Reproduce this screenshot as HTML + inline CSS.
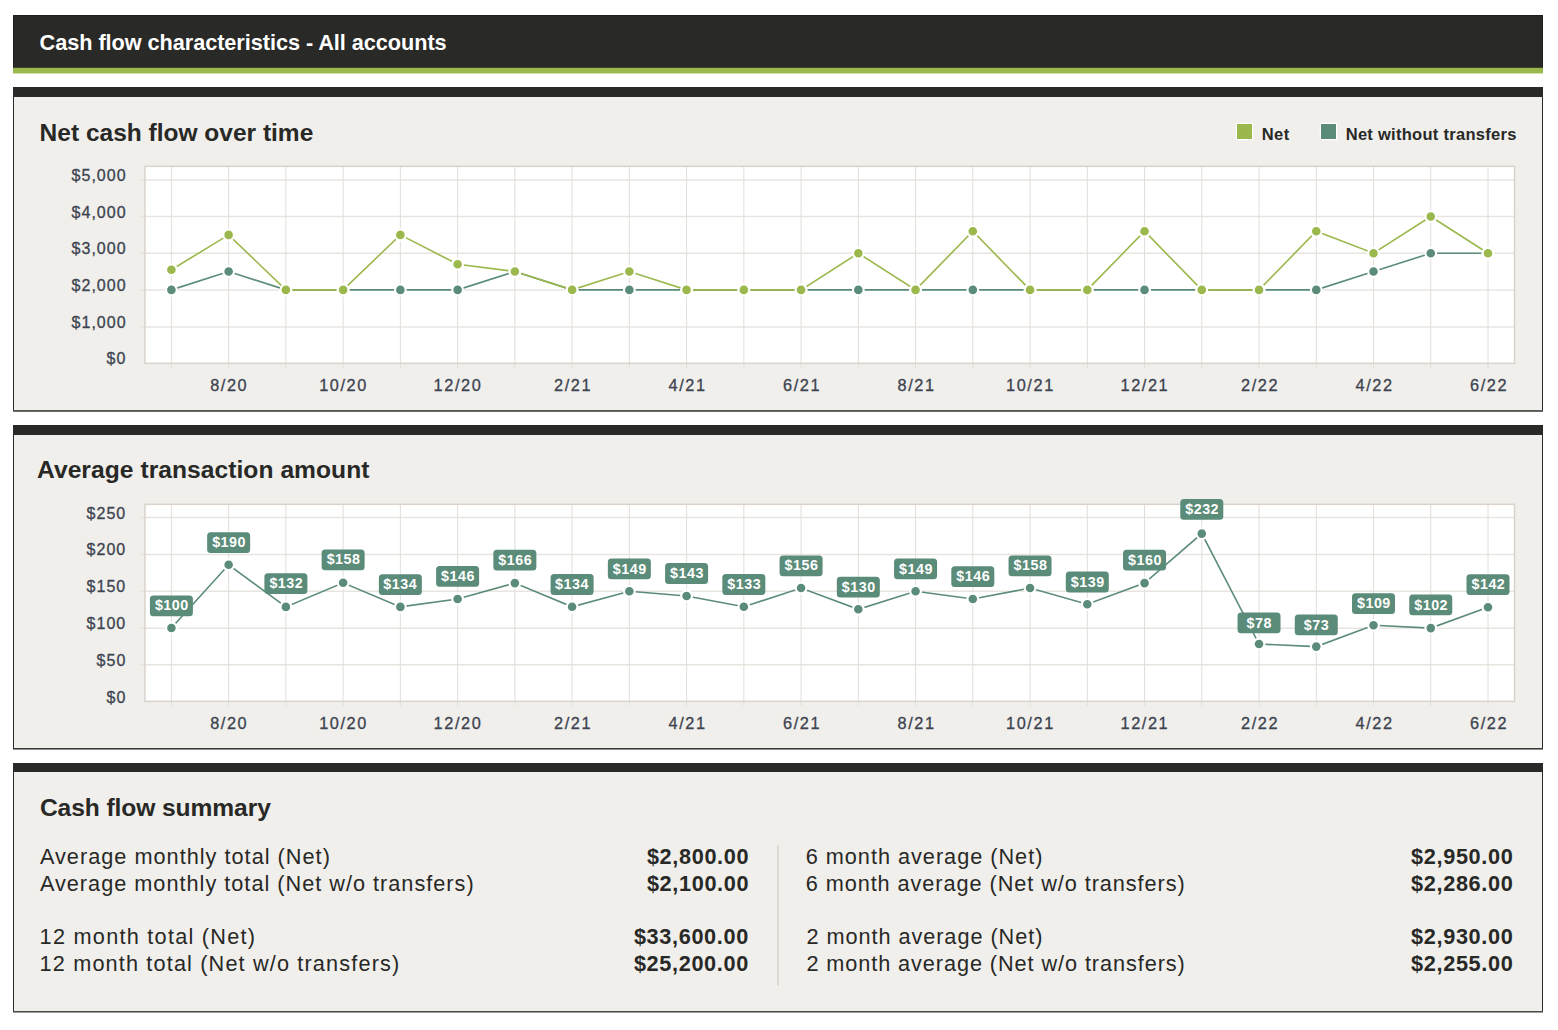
<!DOCTYPE html>
<html><head><meta charset="utf-8"><style>
html,body{margin:0;padding:0;background:#fff;}
body{width:1558px;height:1030px;position:relative;overflow:hidden;font-family:"Liberation Sans",sans-serif;color:#282826;}
.abs{position:absolute;}
.hdr{left:13px;top:15px;width:1530px;height:52.8px;background:#292927;box-shadow:inset 0 0 0 1px #1e1e1d;}
.grn{left:13px;top:67px;width:1530px;height:7px;background:linear-gradient(to bottom, rgba(155,184,76,0.25) 0px, rgba(155,184,76,0.25) 1px, #9bb84c 1px, #9bb84c 6px, rgba(155,184,76,0.45) 6px, rgba(155,184,76,0.45) 7px);}
.panel{left:13px;width:1528px;background:#f0efeb;border-left:1px solid #2a2a28;border-right:1px solid #2a2a28;border-top:10px solid #292927;}
.bl{position:absolute;left:13px;width:1530px;}
.t{position:absolute;white-space:nowrap;line-height:1;font-family:"Liberation Sans",sans-serif;}
svg{position:absolute;left:0;top:0;}
</style></head><body>
<div class="abs hdr"></div>
<div class="abs grn"></div>
<div class="abs panel" style="top:87px;height:313px;"></div>
<div class="bl" style="top:410px;height:1px;background:#565654"></div>
<div class="bl" style="top:411px;height:1px;background:#6a6a68"></div>
<div class="abs panel" style="top:425px;height:313px;"></div>
<div class="bl" style="top:748px;height:1px;background:#3a3a38"></div>
<div class="bl" style="top:749px;height:1px;background:#8e8e8c"></div>
<div class="abs panel" style="top:763px;border-top-width:9px;height:239px;"></div>
<div class="bl" style="top:1011px;height:1px;background:#4a4a48"></div>
<div class="bl" style="top:1012px;height:1px;background:#9c9c9a"></div>
<div class="abs" style="left:1237px;top:124px;width:15px;height:15px;background:#9bb84c;box-shadow:0 0 0 1.2px #fff;"></div>
<div class="abs" style="left:1321px;top:124px;width:15px;height:15px;background:#5b8c79;box-shadow:0 0 0 1.2px #fff;"></div>
<svg width="1558" height="1030" viewBox="0 0 1558 1030">
<rect x="145" y="166.30" width="1369.5" height="197.00" fill="#fff"/>
<line x1="140" y1="180.00" x2="1514.5" y2="180.00" stroke="#e8e5e0" stroke-width="1.5"/>
<line x1="140" y1="216.60" x2="1514.5" y2="216.60" stroke="#e8e5e0" stroke-width="1.5"/>
<line x1="140" y1="253.30" x2="1514.5" y2="253.30" stroke="#e8e5e0" stroke-width="1.5"/>
<line x1="140" y1="290.00" x2="1514.5" y2="290.00" stroke="#e8e5e0" stroke-width="1.5"/>
<line x1="140" y1="326.90" x2="1514.5" y2="326.90" stroke="#e8e5e0" stroke-width="1.5"/>
<line x1="171.40" y1="166.30" x2="171.40" y2="367.80" stroke="#e2ded9" stroke-width="1"/>
<line x1="228.64" y1="166.30" x2="228.64" y2="367.80" stroke="#e2ded9" stroke-width="1"/>
<line x1="285.89" y1="166.30" x2="285.89" y2="367.80" stroke="#e2ded9" stroke-width="1"/>
<line x1="343.13" y1="166.30" x2="343.13" y2="367.80" stroke="#e2ded9" stroke-width="1"/>
<line x1="400.37" y1="166.30" x2="400.37" y2="367.80" stroke="#e2ded9" stroke-width="1"/>
<line x1="457.62" y1="166.30" x2="457.62" y2="367.80" stroke="#e2ded9" stroke-width="1"/>
<line x1="514.86" y1="166.30" x2="514.86" y2="367.80" stroke="#e2ded9" stroke-width="1"/>
<line x1="572.10" y1="166.30" x2="572.10" y2="367.80" stroke="#e2ded9" stroke-width="1"/>
<line x1="629.35" y1="166.30" x2="629.35" y2="367.80" stroke="#e2ded9" stroke-width="1"/>
<line x1="686.59" y1="166.30" x2="686.59" y2="367.80" stroke="#e2ded9" stroke-width="1"/>
<line x1="743.83" y1="166.30" x2="743.83" y2="367.80" stroke="#e2ded9" stroke-width="1"/>
<line x1="801.08" y1="166.30" x2="801.08" y2="367.80" stroke="#e2ded9" stroke-width="1"/>
<line x1="858.32" y1="166.30" x2="858.32" y2="367.80" stroke="#e2ded9" stroke-width="1"/>
<line x1="915.57" y1="166.30" x2="915.57" y2="367.80" stroke="#e2ded9" stroke-width="1"/>
<line x1="972.81" y1="166.30" x2="972.81" y2="367.80" stroke="#e2ded9" stroke-width="1"/>
<line x1="1030.05" y1="166.30" x2="1030.05" y2="367.80" stroke="#e2ded9" stroke-width="1"/>
<line x1="1087.30" y1="166.30" x2="1087.30" y2="367.80" stroke="#e2ded9" stroke-width="1"/>
<line x1="1144.54" y1="166.30" x2="1144.54" y2="367.80" stroke="#e2ded9" stroke-width="1"/>
<line x1="1201.78" y1="166.30" x2="1201.78" y2="367.80" stroke="#e2ded9" stroke-width="1"/>
<line x1="1259.03" y1="166.30" x2="1259.03" y2="367.80" stroke="#e2ded9" stroke-width="1"/>
<line x1="1316.27" y1="166.30" x2="1316.27" y2="367.80" stroke="#e2ded9" stroke-width="1"/>
<line x1="1373.51" y1="166.30" x2="1373.51" y2="367.80" stroke="#e2ded9" stroke-width="1"/>
<line x1="1430.76" y1="166.30" x2="1430.76" y2="367.80" stroke="#e2ded9" stroke-width="1"/>
<line x1="1488.00" y1="166.30" x2="1488.00" y2="367.80" stroke="#e2ded9" stroke-width="1"/>
<rect x="144.95" y="166.35" width="1369.6" height="197.00" fill="none" stroke="#d9d3cb" stroke-width="1.5"/>
<polyline points="171.40,289.88 228.64,271.55 285.89,289.88 343.13,289.88 400.37,289.88 457.62,289.88 514.86,271.55 572.10,289.88 629.35,289.88 686.59,289.88 743.83,289.88 801.08,289.88 858.32,289.88 915.57,289.88 972.81,289.88 1030.05,289.88 1087.30,289.88 1144.54,289.88 1201.78,289.88 1259.03,289.88 1316.27,289.88 1373.51,271.55 1430.76,253.22 1488.00,253.22" fill="none" stroke="#5b8c79" stroke-width="1.6"/>
<polyline points="171.40,269.72 228.64,234.89 285.89,289.88 343.13,289.88 400.37,234.89 457.62,264.22 514.86,271.55 572.10,289.88 629.35,271.55 686.59,289.88 743.83,289.88 801.08,289.88 858.32,253.22 915.57,289.88 972.81,231.22 1030.05,289.88 1087.30,289.88 1144.54,231.22 1201.78,289.88 1259.03,289.88 1316.27,231.22 1373.51,253.22 1430.76,216.56 1488.00,253.22" fill="none" stroke="#9bb84c" stroke-width="1.6"/>
<circle cx="171.40" cy="289.88" r="5.35" fill="#5b8c79" stroke="#fff" stroke-width="2.1"/>
<circle cx="228.64" cy="271.55" r="5.35" fill="#5b8c79" stroke="#fff" stroke-width="2.1"/>
<circle cx="285.89" cy="289.88" r="5.35" fill="#5b8c79" stroke="#fff" stroke-width="2.1"/>
<circle cx="343.13" cy="289.88" r="5.35" fill="#5b8c79" stroke="#fff" stroke-width="2.1"/>
<circle cx="400.37" cy="289.88" r="5.35" fill="#5b8c79" stroke="#fff" stroke-width="2.1"/>
<circle cx="457.62" cy="289.88" r="5.35" fill="#5b8c79" stroke="#fff" stroke-width="2.1"/>
<circle cx="514.86" cy="271.55" r="5.35" fill="#5b8c79" stroke="#fff" stroke-width="2.1"/>
<circle cx="572.10" cy="289.88" r="5.35" fill="#5b8c79" stroke="#fff" stroke-width="2.1"/>
<circle cx="629.35" cy="289.88" r="5.35" fill="#5b8c79" stroke="#fff" stroke-width="2.1"/>
<circle cx="686.59" cy="289.88" r="5.35" fill="#5b8c79" stroke="#fff" stroke-width="2.1"/>
<circle cx="743.83" cy="289.88" r="5.35" fill="#5b8c79" stroke="#fff" stroke-width="2.1"/>
<circle cx="801.08" cy="289.88" r="5.35" fill="#5b8c79" stroke="#fff" stroke-width="2.1"/>
<circle cx="858.32" cy="289.88" r="5.35" fill="#5b8c79" stroke="#fff" stroke-width="2.1"/>
<circle cx="915.57" cy="289.88" r="5.35" fill="#5b8c79" stroke="#fff" stroke-width="2.1"/>
<circle cx="972.81" cy="289.88" r="5.35" fill="#5b8c79" stroke="#fff" stroke-width="2.1"/>
<circle cx="1030.05" cy="289.88" r="5.35" fill="#5b8c79" stroke="#fff" stroke-width="2.1"/>
<circle cx="1087.30" cy="289.88" r="5.35" fill="#5b8c79" stroke="#fff" stroke-width="2.1"/>
<circle cx="1144.54" cy="289.88" r="5.35" fill="#5b8c79" stroke="#fff" stroke-width="2.1"/>
<circle cx="1201.78" cy="289.88" r="5.35" fill="#5b8c79" stroke="#fff" stroke-width="2.1"/>
<circle cx="1259.03" cy="289.88" r="5.35" fill="#5b8c79" stroke="#fff" stroke-width="2.1"/>
<circle cx="1316.27" cy="289.88" r="5.35" fill="#5b8c79" stroke="#fff" stroke-width="2.1"/>
<circle cx="1373.51" cy="271.55" r="5.35" fill="#5b8c79" stroke="#fff" stroke-width="2.1"/>
<circle cx="1430.76" cy="253.22" r="5.35" fill="#5b8c79" stroke="#fff" stroke-width="2.1"/>
<circle cx="1488.00" cy="253.22" r="5.35" fill="#5b8c79" stroke="#fff" stroke-width="2.1"/>
<circle cx="171.40" cy="269.72" r="5.35" fill="#9bb84c" stroke="#fff" stroke-width="2.1"/>
<circle cx="228.64" cy="234.89" r="5.35" fill="#9bb84c" stroke="#fff" stroke-width="2.1"/>
<circle cx="285.89" cy="289.88" r="5.35" fill="#9bb84c" stroke="#fff" stroke-width="2.1"/>
<circle cx="343.13" cy="289.88" r="5.35" fill="#9bb84c" stroke="#fff" stroke-width="2.1"/>
<circle cx="400.37" cy="234.89" r="5.35" fill="#9bb84c" stroke="#fff" stroke-width="2.1"/>
<circle cx="457.62" cy="264.22" r="5.35" fill="#9bb84c" stroke="#fff" stroke-width="2.1"/>
<circle cx="514.86" cy="271.55" r="5.35" fill="#9bb84c" stroke="#fff" stroke-width="2.1"/>
<circle cx="572.10" cy="289.88" r="5.35" fill="#9bb84c" stroke="#fff" stroke-width="2.1"/>
<circle cx="629.35" cy="271.55" r="5.35" fill="#9bb84c" stroke="#fff" stroke-width="2.1"/>
<circle cx="686.59" cy="289.88" r="5.35" fill="#9bb84c" stroke="#fff" stroke-width="2.1"/>
<circle cx="743.83" cy="289.88" r="5.35" fill="#9bb84c" stroke="#fff" stroke-width="2.1"/>
<circle cx="801.08" cy="289.88" r="5.35" fill="#9bb84c" stroke="#fff" stroke-width="2.1"/>
<circle cx="858.32" cy="253.22" r="5.35" fill="#9bb84c" stroke="#fff" stroke-width="2.1"/>
<circle cx="915.57" cy="289.88" r="5.35" fill="#9bb84c" stroke="#fff" stroke-width="2.1"/>
<circle cx="972.81" cy="231.22" r="5.35" fill="#9bb84c" stroke="#fff" stroke-width="2.1"/>
<circle cx="1030.05" cy="289.88" r="5.35" fill="#9bb84c" stroke="#fff" stroke-width="2.1"/>
<circle cx="1087.30" cy="289.88" r="5.35" fill="#9bb84c" stroke="#fff" stroke-width="2.1"/>
<circle cx="1144.54" cy="231.22" r="5.35" fill="#9bb84c" stroke="#fff" stroke-width="2.1"/>
<circle cx="1201.78" cy="289.88" r="5.35" fill="#9bb84c" stroke="#fff" stroke-width="2.1"/>
<circle cx="1259.03" cy="289.88" r="5.35" fill="#9bb84c" stroke="#fff" stroke-width="2.1"/>
<circle cx="1316.27" cy="231.22" r="5.35" fill="#9bb84c" stroke="#fff" stroke-width="2.1"/>
<circle cx="1373.51" cy="253.22" r="5.35" fill="#9bb84c" stroke="#fff" stroke-width="2.1"/>
<circle cx="1430.76" cy="216.56" r="5.35" fill="#9bb84c" stroke="#fff" stroke-width="2.1"/>
<circle cx="1488.00" cy="253.22" r="5.35" fill="#9bb84c" stroke="#fff" stroke-width="2.1"/>
<rect x="145" y="504.30" width="1369.5" height="197.00" fill="#fff"/>
<line x1="140" y1="517.60" x2="1514.5" y2="517.60" stroke="#e8e5e0" stroke-width="1.5"/>
<line x1="140" y1="554.50" x2="1514.5" y2="554.50" stroke="#e8e5e0" stroke-width="1.5"/>
<line x1="140" y1="591.30" x2="1514.5" y2="591.30" stroke="#e8e5e0" stroke-width="1.5"/>
<line x1="140" y1="628.20" x2="1514.5" y2="628.20" stroke="#e8e5e0" stroke-width="1.5"/>
<line x1="140" y1="664.80" x2="1514.5" y2="664.80" stroke="#e8e5e0" stroke-width="1.5"/>
<line x1="171.40" y1="504.30" x2="171.40" y2="705.80" stroke="#e2ded9" stroke-width="1"/>
<line x1="228.64" y1="504.30" x2="228.64" y2="705.80" stroke="#e2ded9" stroke-width="1"/>
<line x1="285.89" y1="504.30" x2="285.89" y2="705.80" stroke="#e2ded9" stroke-width="1"/>
<line x1="343.13" y1="504.30" x2="343.13" y2="705.80" stroke="#e2ded9" stroke-width="1"/>
<line x1="400.37" y1="504.30" x2="400.37" y2="705.80" stroke="#e2ded9" stroke-width="1"/>
<line x1="457.62" y1="504.30" x2="457.62" y2="705.80" stroke="#e2ded9" stroke-width="1"/>
<line x1="514.86" y1="504.30" x2="514.86" y2="705.80" stroke="#e2ded9" stroke-width="1"/>
<line x1="572.10" y1="504.30" x2="572.10" y2="705.80" stroke="#e2ded9" stroke-width="1"/>
<line x1="629.35" y1="504.30" x2="629.35" y2="705.80" stroke="#e2ded9" stroke-width="1"/>
<line x1="686.59" y1="504.30" x2="686.59" y2="705.80" stroke="#e2ded9" stroke-width="1"/>
<line x1="743.83" y1="504.30" x2="743.83" y2="705.80" stroke="#e2ded9" stroke-width="1"/>
<line x1="801.08" y1="504.30" x2="801.08" y2="705.80" stroke="#e2ded9" stroke-width="1"/>
<line x1="858.32" y1="504.30" x2="858.32" y2="705.80" stroke="#e2ded9" stroke-width="1"/>
<line x1="915.57" y1="504.30" x2="915.57" y2="705.80" stroke="#e2ded9" stroke-width="1"/>
<line x1="972.81" y1="504.30" x2="972.81" y2="705.80" stroke="#e2ded9" stroke-width="1"/>
<line x1="1030.05" y1="504.30" x2="1030.05" y2="705.80" stroke="#e2ded9" stroke-width="1"/>
<line x1="1087.30" y1="504.30" x2="1087.30" y2="705.80" stroke="#e2ded9" stroke-width="1"/>
<line x1="1144.54" y1="504.30" x2="1144.54" y2="705.80" stroke="#e2ded9" stroke-width="1"/>
<line x1="1201.78" y1="504.30" x2="1201.78" y2="705.80" stroke="#e2ded9" stroke-width="1"/>
<line x1="1259.03" y1="504.30" x2="1259.03" y2="705.80" stroke="#e2ded9" stroke-width="1"/>
<line x1="1316.27" y1="504.30" x2="1316.27" y2="705.80" stroke="#e2ded9" stroke-width="1"/>
<line x1="1373.51" y1="504.30" x2="1373.51" y2="705.80" stroke="#e2ded9" stroke-width="1"/>
<line x1="1430.76" y1="504.30" x2="1430.76" y2="705.80" stroke="#e2ded9" stroke-width="1"/>
<line x1="1488.00" y1="504.30" x2="1488.00" y2="705.80" stroke="#e2ded9" stroke-width="1"/>
<rect x="144.95" y="504.35" width="1369.6" height="197.00" fill="none" stroke="#d9d3cb" stroke-width="1.5"/>
<polyline points="171.40,628.00 228.64,564.80 285.89,606.90 343.13,582.80 400.37,606.90 457.62,599.00 514.86,583.10 572.10,606.80 629.35,591.30 686.59,596.00 743.83,606.80 801.08,588.00 858.32,609.30 915.57,591.30 972.81,599.00 1030.05,588.00 1087.30,604.20 1144.54,583.10 1201.78,533.60 1259.03,644.00 1316.27,646.60 1373.51,625.30 1430.76,628.10 1488.00,607.30" fill="none" stroke="#5b8c79" stroke-width="1.6"/>
<circle cx="171.40" cy="628.00" r="5.35" fill="#5b8c79" stroke="#fff" stroke-width="2.1"/>
<circle cx="228.64" cy="564.80" r="5.35" fill="#5b8c79" stroke="#fff" stroke-width="2.1"/>
<circle cx="285.89" cy="606.90" r="5.35" fill="#5b8c79" stroke="#fff" stroke-width="2.1"/>
<circle cx="343.13" cy="582.80" r="5.35" fill="#5b8c79" stroke="#fff" stroke-width="2.1"/>
<circle cx="400.37" cy="606.90" r="5.35" fill="#5b8c79" stroke="#fff" stroke-width="2.1"/>
<circle cx="457.62" cy="599.00" r="5.35" fill="#5b8c79" stroke="#fff" stroke-width="2.1"/>
<circle cx="514.86" cy="583.10" r="5.35" fill="#5b8c79" stroke="#fff" stroke-width="2.1"/>
<circle cx="572.10" cy="606.80" r="5.35" fill="#5b8c79" stroke="#fff" stroke-width="2.1"/>
<circle cx="629.35" cy="591.30" r="5.35" fill="#5b8c79" stroke="#fff" stroke-width="2.1"/>
<circle cx="686.59" cy="596.00" r="5.35" fill="#5b8c79" stroke="#fff" stroke-width="2.1"/>
<circle cx="743.83" cy="606.80" r="5.35" fill="#5b8c79" stroke="#fff" stroke-width="2.1"/>
<circle cx="801.08" cy="588.00" r="5.35" fill="#5b8c79" stroke="#fff" stroke-width="2.1"/>
<circle cx="858.32" cy="609.30" r="5.35" fill="#5b8c79" stroke="#fff" stroke-width="2.1"/>
<circle cx="915.57" cy="591.30" r="5.35" fill="#5b8c79" stroke="#fff" stroke-width="2.1"/>
<circle cx="972.81" cy="599.00" r="5.35" fill="#5b8c79" stroke="#fff" stroke-width="2.1"/>
<circle cx="1030.05" cy="588.00" r="5.35" fill="#5b8c79" stroke="#fff" stroke-width="2.1"/>
<circle cx="1087.30" cy="604.20" r="5.35" fill="#5b8c79" stroke="#fff" stroke-width="2.1"/>
<circle cx="1144.54" cy="583.10" r="5.35" fill="#5b8c79" stroke="#fff" stroke-width="2.1"/>
<circle cx="1201.78" cy="533.60" r="5.35" fill="#5b8c79" stroke="#fff" stroke-width="2.1"/>
<circle cx="1259.03" cy="644.00" r="5.35" fill="#5b8c79" stroke="#fff" stroke-width="2.1"/>
<circle cx="1316.27" cy="646.60" r="5.35" fill="#5b8c79" stroke="#fff" stroke-width="2.1"/>
<circle cx="1373.51" cy="625.30" r="5.35" fill="#5b8c79" stroke="#fff" stroke-width="2.1"/>
<circle cx="1430.76" cy="628.10" r="5.35" fill="#5b8c79" stroke="#fff" stroke-width="2.1"/>
<circle cx="1488.00" cy="607.30" r="5.35" fill="#5b8c79" stroke="#fff" stroke-width="2.1"/>
<rect x="149.90" y="595.40" width="43" height="20.8" rx="3.5" fill="#5b8c79"/>
<rect x="207.14" y="532.20" width="43" height="20.8" rx="3.5" fill="#5b8c79"/>
<rect x="264.39" y="573.30" width="43" height="20.8" rx="3.5" fill="#5b8c79"/>
<rect x="321.63" y="549.40" width="43" height="20.8" rx="3.5" fill="#5b8c79"/>
<rect x="378.87" y="574.30" width="43" height="20.8" rx="3.5" fill="#5b8c79"/>
<rect x="436.12" y="566.00" width="43" height="20.8" rx="3.5" fill="#5b8c79"/>
<rect x="493.36" y="549.80" width="43" height="20.8" rx="3.5" fill="#5b8c79"/>
<rect x="550.60" y="574.10" width="43" height="20.8" rx="3.5" fill="#5b8c79"/>
<rect x="607.85" y="558.50" width="43" height="20.8" rx="3.5" fill="#5b8c79"/>
<rect x="665.09" y="563.10" width="43" height="20.8" rx="3.5" fill="#5b8c79"/>
<rect x="722.33" y="574.10" width="43" height="20.8" rx="3.5" fill="#5b8c79"/>
<rect x="779.58" y="555.40" width="43" height="20.8" rx="3.5" fill="#5b8c79"/>
<rect x="836.82" y="576.70" width="43" height="20.8" rx="3.5" fill="#5b8c79"/>
<rect x="894.07" y="558.50" width="43" height="20.8" rx="3.5" fill="#5b8c79"/>
<rect x="951.31" y="566.20" width="43" height="20.8" rx="3.5" fill="#5b8c79"/>
<rect x="1008.55" y="555.40" width="43" height="20.8" rx="3.5" fill="#5b8c79"/>
<rect x="1065.80" y="571.60" width="43" height="20.8" rx="3.5" fill="#5b8c79"/>
<rect x="1123.04" y="549.80" width="43" height="20.8" rx="3.5" fill="#5b8c79"/>
<rect x="1180.28" y="499.00" width="43" height="20.8" rx="3.5" fill="#5b8c79"/>
<rect x="1237.53" y="612.50" width="43" height="20.8" rx="3.5" fill="#5b8c79"/>
<rect x="1294.77" y="614.50" width="43" height="20.8" rx="3.5" fill="#5b8c79"/>
<rect x="1352.01" y="593.20" width="43" height="20.8" rx="3.5" fill="#5b8c79"/>
<rect x="1409.26" y="594.50" width="43" height="20.8" rx="3.5" fill="#5b8c79"/>
<rect x="1466.50" y="574.20" width="43" height="20.8" rx="3.5" fill="#5b8c79"/>
<line x1="777.9" y1="845.5" x2="777.9" y2="985.5" stroke="#d8d2c9" stroke-width="1.5"/>
</svg>
<div class="t" style="left:39.60px;top:31.88px;font-size:21.7px;font-weight:700;letter-spacing:-0.05px;color:#fff;">Cash flow characteristics - All accounts</div>
<div class="t" style="left:39.60px;top:120.68px;font-size:24.5px;font-weight:700;letter-spacing:0.0px;color:#282826;">Net cash flow over time</div>
<div class="t" style="left:37.00px;top:457.68px;font-size:24.6px;font-weight:700;letter-spacing:0.05px;color:#282826;">Average transaction amount</div>
<div class="t" style="left:39.95px;top:795.67px;font-size:24.6px;font-weight:700;letter-spacing:-0.09px;color:#282826;">Cash flow summary</div>
<div class="t" style="left:1261.80px;top:125.88px;font-size:16.5px;font-weight:700;letter-spacing:0.4px;color:#282826;">Net</div>
<div class="t" style="left:1345.70px;top:125.88px;font-size:16.5px;font-weight:700;letter-spacing:0.28px;color:#282826;">Net without transfers</div>
<div class="t" style="left:39.90px;top:845.78px;font-size:21.7px;font-weight:400;letter-spacing:1.015px;color:#282826;">Average monthly total (Net)</div>
<div class="t" style="left:805.70px;top:845.78px;font-size:21.7px;font-weight:400;letter-spacing:0.985px;color:#282826;">6 month average (Net)</div>
<div class="t" style="left:646.90px;top:845.77px;font-size:21.7px;font-weight:700;letter-spacing:0.65px;color:#282826;">$2,800.00</div>
<div class="t" style="left:1411.10px;top:845.77px;font-size:21.7px;font-weight:700;letter-spacing:0.65px;color:#282826;">$2,950.00</div>
<div class="t" style="left:39.90px;top:872.78px;font-size:21.7px;font-weight:400;letter-spacing:1.0px;color:#282826;">Average monthly total (Net w/o transfers)</div>
<div class="t" style="left:805.70px;top:872.78px;font-size:21.7px;font-weight:400;letter-spacing:0.938px;color:#282826;">6 month average (Net w/o transfers)</div>
<div class="t" style="left:646.90px;top:872.77px;font-size:21.7px;font-weight:700;letter-spacing:0.65px;color:#282826;">$2,100.00</div>
<div class="t" style="left:1411.10px;top:872.77px;font-size:21.7px;font-weight:700;letter-spacing:0.65px;color:#282826;">$2,286.00</div>
<div class="t" style="left:39.60px;top:925.78px;font-size:21.7px;font-weight:400;letter-spacing:1.253px;color:#282826;">12 month total (Net)</div>
<div class="t" style="left:806.40px;top:925.78px;font-size:21.7px;font-weight:400;letter-spacing:0.95px;color:#282826;">2 month average (Net)</div>
<div class="t" style="left:633.90px;top:925.77px;font-size:21.7px;font-weight:700;letter-spacing:0.65px;color:#282826;">$33,600.00</div>
<div class="t" style="left:1411.10px;top:925.77px;font-size:21.7px;font-weight:700;letter-spacing:0.65px;color:#282826;">$2,930.00</div>
<div class="t" style="left:39.60px;top:952.78px;font-size:21.7px;font-weight:400;letter-spacing:1.145px;color:#282826;">12 month total (Net w/o transfers)</div>
<div class="t" style="left:806.40px;top:952.78px;font-size:21.7px;font-weight:400;letter-spacing:0.918px;color:#282826;">2 month average (Net w/o transfers)</div>
<div class="t" style="left:633.90px;top:952.77px;font-size:21.7px;font-weight:700;letter-spacing:0.65px;color:#282826;">$25,200.00</div>
<div class="t" style="left:1411.10px;top:952.77px;font-size:21.7px;font-weight:700;letter-spacing:0.65px;color:#282826;">$2,255.00</div>
<div class="t" style="left:71.60px;top:167.96px;font-size:16px;font-weight:400;letter-spacing:1.0px;color:#3d4350;-webkit-text-stroke:0.3px #3d4350">$5,000</div>
<div class="t" style="left:71.60px;top:204.56px;font-size:16px;font-weight:400;letter-spacing:1.0px;color:#3d4350;-webkit-text-stroke:0.3px #3d4350">$4,000</div>
<div class="t" style="left:71.60px;top:241.26px;font-size:16px;font-weight:400;letter-spacing:1.0px;color:#3d4350;-webkit-text-stroke:0.3px #3d4350">$3,000</div>
<div class="t" style="left:71.60px;top:277.96px;font-size:16px;font-weight:400;letter-spacing:1.0px;color:#3d4350;-webkit-text-stroke:0.3px #3d4350">$2,000</div>
<div class="t" style="left:71.60px;top:314.86px;font-size:16px;font-weight:400;letter-spacing:1.0px;color:#3d4350;-webkit-text-stroke:0.3px #3d4350">$1,000</div>
<div class="t" style="left:106.60px;top:351.26px;font-size:16px;font-weight:400;letter-spacing:1.0px;color:#3d4350;-webkit-text-stroke:0.3px #3d4350">$0</div>
<div class="t" style="left:86.60px;top:505.56px;font-size:16px;font-weight:400;letter-spacing:1.0px;color:#3d4350;-webkit-text-stroke:0.3px #3d4350">$250</div>
<div class="t" style="left:86.60px;top:542.46px;font-size:16px;font-weight:400;letter-spacing:1.0px;color:#3d4350;-webkit-text-stroke:0.3px #3d4350">$200</div>
<div class="t" style="left:86.60px;top:579.26px;font-size:16px;font-weight:400;letter-spacing:1.0px;color:#3d4350;-webkit-text-stroke:0.3px #3d4350">$150</div>
<div class="t" style="left:86.60px;top:616.16px;font-size:16px;font-weight:400;letter-spacing:1.0px;color:#3d4350;-webkit-text-stroke:0.3px #3d4350">$100</div>
<div class="t" style="left:96.60px;top:652.76px;font-size:16px;font-weight:400;letter-spacing:1.0px;color:#3d4350;-webkit-text-stroke:0.3px #3d4350">$50</div>
<div class="t" style="left:106.60px;top:689.56px;font-size:16px;font-weight:400;letter-spacing:1.0px;color:#3d4350;-webkit-text-stroke:0.3px #3d4350">$0</div>
<div class="t" style="left:210.14px;top:377.09px;font-size:16.3px;font-weight:400;letter-spacing:1.6px;color:#3d4350;-webkit-text-stroke:0.3px #3d4350">8/20</div>
<div class="t" style="left:319.13px;top:377.09px;font-size:16.3px;font-weight:400;letter-spacing:1.6px;color:#3d4350;-webkit-text-stroke:0.3px #3d4350">10/20</div>
<div class="t" style="left:433.62px;top:377.09px;font-size:16.3px;font-weight:400;letter-spacing:1.6px;color:#3d4350;-webkit-text-stroke:0.3px #3d4350">12/20</div>
<div class="t" style="left:554.10px;top:377.09px;font-size:16.3px;font-weight:400;letter-spacing:1.6px;color:#3d4350;-webkit-text-stroke:0.3px #3d4350">2/21</div>
<div class="t" style="left:668.59px;top:377.09px;font-size:16.3px;font-weight:400;letter-spacing:1.6px;color:#3d4350;-webkit-text-stroke:0.3px #3d4350">4/21</div>
<div class="t" style="left:783.08px;top:377.09px;font-size:16.3px;font-weight:400;letter-spacing:1.6px;color:#3d4350;-webkit-text-stroke:0.3px #3d4350">6/21</div>
<div class="t" style="left:897.57px;top:377.09px;font-size:16.3px;font-weight:400;letter-spacing:1.6px;color:#3d4350;-webkit-text-stroke:0.3px #3d4350">8/21</div>
<div class="t" style="left:1006.05px;top:377.09px;font-size:16.3px;font-weight:400;letter-spacing:1.6px;color:#3d4350;-webkit-text-stroke:0.3px #3d4350">10/21</div>
<div class="t" style="left:1120.54px;top:377.09px;font-size:16.3px;font-weight:400;letter-spacing:1.6px;color:#3d4350;-webkit-text-stroke:0.3px #3d4350">12/21</div>
<div class="t" style="left:1241.03px;top:377.09px;font-size:16.3px;font-weight:400;letter-spacing:1.6px;color:#3d4350;-webkit-text-stroke:0.3px #3d4350">2/22</div>
<div class="t" style="left:1355.51px;top:377.09px;font-size:16.3px;font-weight:400;letter-spacing:1.6px;color:#3d4350;-webkit-text-stroke:0.3px #3d4350">4/22</div>
<div class="t" style="left:1470.00px;top:377.09px;font-size:16.3px;font-weight:400;letter-spacing:1.6px;color:#3d4350;-webkit-text-stroke:0.3px #3d4350">6/22</div>
<div class="t" style="left:210.14px;top:715.09px;font-size:16.3px;font-weight:400;letter-spacing:1.6px;color:#3d4350;-webkit-text-stroke:0.3px #3d4350">8/20</div>
<div class="t" style="left:319.13px;top:715.09px;font-size:16.3px;font-weight:400;letter-spacing:1.6px;color:#3d4350;-webkit-text-stroke:0.3px #3d4350">10/20</div>
<div class="t" style="left:433.62px;top:715.09px;font-size:16.3px;font-weight:400;letter-spacing:1.6px;color:#3d4350;-webkit-text-stroke:0.3px #3d4350">12/20</div>
<div class="t" style="left:554.10px;top:715.09px;font-size:16.3px;font-weight:400;letter-spacing:1.6px;color:#3d4350;-webkit-text-stroke:0.3px #3d4350">2/21</div>
<div class="t" style="left:668.59px;top:715.09px;font-size:16.3px;font-weight:400;letter-spacing:1.6px;color:#3d4350;-webkit-text-stroke:0.3px #3d4350">4/21</div>
<div class="t" style="left:783.08px;top:715.09px;font-size:16.3px;font-weight:400;letter-spacing:1.6px;color:#3d4350;-webkit-text-stroke:0.3px #3d4350">6/21</div>
<div class="t" style="left:897.57px;top:715.09px;font-size:16.3px;font-weight:400;letter-spacing:1.6px;color:#3d4350;-webkit-text-stroke:0.3px #3d4350">8/21</div>
<div class="t" style="left:1006.05px;top:715.09px;font-size:16.3px;font-weight:400;letter-spacing:1.6px;color:#3d4350;-webkit-text-stroke:0.3px #3d4350">10/21</div>
<div class="t" style="left:1120.54px;top:715.09px;font-size:16.3px;font-weight:400;letter-spacing:1.6px;color:#3d4350;-webkit-text-stroke:0.3px #3d4350">12/21</div>
<div class="t" style="left:1241.03px;top:715.09px;font-size:16.3px;font-weight:400;letter-spacing:1.6px;color:#3d4350;-webkit-text-stroke:0.3px #3d4350">2/22</div>
<div class="t" style="left:1355.51px;top:715.09px;font-size:16.3px;font-weight:400;letter-spacing:1.6px;color:#3d4350;-webkit-text-stroke:0.3px #3d4350">4/22</div>
<div class="t" style="left:1470.00px;top:715.09px;font-size:16.3px;font-weight:400;letter-spacing:1.6px;color:#3d4350;-webkit-text-stroke:0.3px #3d4350">6/22</div>
<div class="t" style="left:154.90px;top:598.47px;font-size:14.3px;font-weight:700;letter-spacing:0.5px;color:#fff;">$100</div>
<div class="t" style="left:212.14px;top:535.27px;font-size:14.3px;font-weight:700;letter-spacing:0.5px;color:#fff;">$190</div>
<div class="t" style="left:269.39px;top:576.37px;font-size:14.3px;font-weight:700;letter-spacing:0.5px;color:#fff;">$132</div>
<div class="t" style="left:326.63px;top:552.47px;font-size:14.3px;font-weight:700;letter-spacing:0.5px;color:#fff;">$158</div>
<div class="t" style="left:383.37px;top:577.37px;font-size:14.3px;font-weight:700;letter-spacing:0.5px;color:#fff;">$134</div>
<div class="t" style="left:441.12px;top:569.07px;font-size:14.3px;font-weight:700;letter-spacing:0.5px;color:#fff;">$146</div>
<div class="t" style="left:498.36px;top:552.87px;font-size:14.3px;font-weight:700;letter-spacing:0.5px;color:#fff;">$166</div>
<div class="t" style="left:555.10px;top:577.17px;font-size:14.3px;font-weight:700;letter-spacing:0.5px;color:#fff;">$134</div>
<div class="t" style="left:612.85px;top:561.57px;font-size:14.3px;font-weight:700;letter-spacing:0.5px;color:#fff;">$149</div>
<div class="t" style="left:670.09px;top:566.17px;font-size:14.3px;font-weight:700;letter-spacing:0.5px;color:#fff;">$143</div>
<div class="t" style="left:727.33px;top:577.17px;font-size:14.3px;font-weight:700;letter-spacing:0.5px;color:#fff;">$133</div>
<div class="t" style="left:784.58px;top:558.47px;font-size:14.3px;font-weight:700;letter-spacing:0.5px;color:#fff;">$156</div>
<div class="t" style="left:841.82px;top:579.77px;font-size:14.3px;font-weight:700;letter-spacing:0.5px;color:#fff;">$130</div>
<div class="t" style="left:899.07px;top:561.57px;font-size:14.3px;font-weight:700;letter-spacing:0.5px;color:#fff;">$149</div>
<div class="t" style="left:956.31px;top:569.27px;font-size:14.3px;font-weight:700;letter-spacing:0.5px;color:#fff;">$146</div>
<div class="t" style="left:1013.55px;top:558.47px;font-size:14.3px;font-weight:700;letter-spacing:0.5px;color:#fff;">$158</div>
<div class="t" style="left:1070.80px;top:574.67px;font-size:14.3px;font-weight:700;letter-spacing:0.5px;color:#fff;">$139</div>
<div class="t" style="left:1128.04px;top:552.87px;font-size:14.3px;font-weight:700;letter-spacing:0.5px;color:#fff;">$160</div>
<div class="t" style="left:1185.28px;top:502.07px;font-size:14.3px;font-weight:700;letter-spacing:0.5px;color:#fff;">$232</div>
<div class="t" style="left:1246.53px;top:615.57px;font-size:14.3px;font-weight:700;letter-spacing:0.5px;color:#fff;">$78</div>
<div class="t" style="left:1303.77px;top:617.57px;font-size:14.3px;font-weight:700;letter-spacing:0.5px;color:#fff;">$73</div>
<div class="t" style="left:1357.01px;top:596.27px;font-size:14.3px;font-weight:700;letter-spacing:0.5px;color:#fff;">$109</div>
<div class="t" style="left:1414.26px;top:597.57px;font-size:14.3px;font-weight:700;letter-spacing:0.5px;color:#fff;">$102</div>
<div class="t" style="left:1471.50px;top:577.27px;font-size:14.3px;font-weight:700;letter-spacing:0.5px;color:#fff;">$142</div>
</body></html>
